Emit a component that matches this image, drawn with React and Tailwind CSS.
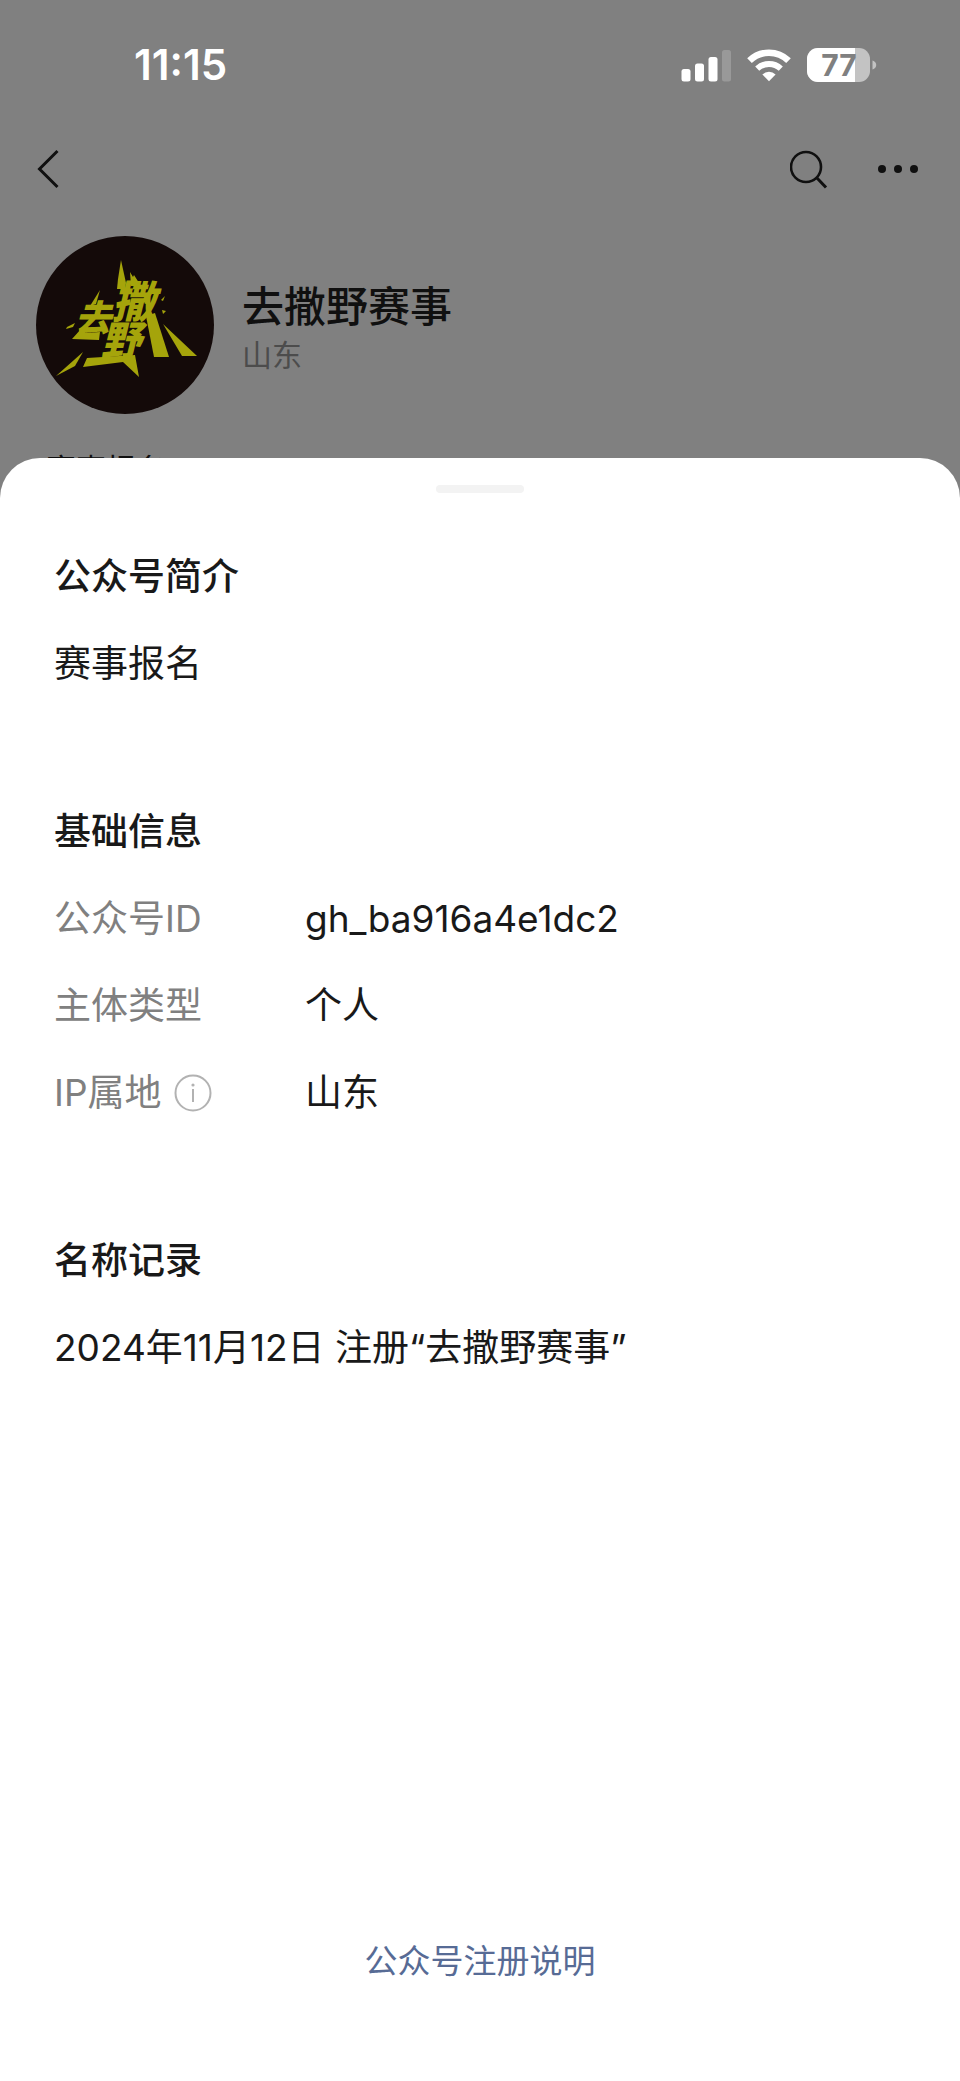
import React from "react";

const infoRows = [
  { label: "公众号ID", value: "gh_ba916a4e1dc2" },
  { label: "主体类型", value: "个人" },
  { label: "IP属地", value: "山东", hint: true },
];

function SignalIcon() {
  return (
    <svg width="50" height="34" viewBox="0 0 50 34" fill="white" aria-hidden="true">
      <rect x="0.5" y="21" width="9" height="12.5" rx="2.5" />
      <rect x="14" y="15.5" width="9" height="18" rx="2.5" />
      <rect x="27.5" y="9" width="9" height="24.5" rx="2.5" />
      <rect x="41" y="2" width="9" height="31.5" rx="2.5" opacity="0.2" />
    </svg>
  );
}

function WifiIcon() {
  return (
    <svg width="44" height="34" viewBox="0 0 44 34" fill="none" stroke="white" aria-hidden="true">
      <path d="M2.5 12.7a28 28 0 0 1 39 0" strokeWidth="6.6" />
      <path d="M10.2 20.6a17.5 17.5 0 0 1 23.6 0" strokeWidth="6" />
      <path d="M22 33.2l-6.6-6.7a9.6 9.6 0 0 1 13.2 0z" fill="white" stroke="none" />
    </svg>
  );
}

function BatteryIcon() {
  return (
    <svg width="70" height="34" viewBox="0 0 70 34" aria-label="77%">
      <defs>
        <clipPath id="battery-body">
          <rect x="0" y="0" width="63" height="34" rx="11" />
        </clipPath>
      </defs>
      <g clipPath="url(#battery-body)">
        <rect width="63" height="34" fill="#c3c3c3" />
        <rect width="48" height="34" fill="white" />
      </g>
      <path d="M65.5 12.5c2.4.6 3.7 2.3 3.7 4.5s-1.3 3.9-3.7 4.5z" fill="#c3c3c3" />
      <text x="32" y="28" textAnchor="middle" fill="#808080" className="font-['Inter',sans-serif] text-[30px] font-bold">
        77
      </text>
    </svg>
  );
}

function Avatar() {
  return (
    <svg viewBox="0 0 178 178" className="size-[178px] shrink-0 rounded-full bg-[#140a09]" fill="#a5a40b" aria-label="去撒野赛事">
      <path d="M85 24l5 23-1 6h-8l1-10z" />
      <path d="M94 36l3 5 1-2 7 11h-10z" />
      <path d="M64 54l-4 14-6 2z" />
      <path d="M110 80l9-3 14 44h-15z" />
      <path d="M127 88l34 32h-15z" />
      <path d="M47 116l-8 14-19 10z" />
      <path d="M51 122l48-3 4 22-16-15-40 5z" />
      <path d="M36 103l9-10 4 4 15-1-1 8z" />
      <path d="M31 91l8-4-2 4-7 2zM125 64l4-4-2 5zM126 74l4 1-3 3z" />
      <g className="font-['Noto_Sans_CJK_SC',sans-serif] font-black italic">
        <text x="39" y="95" className="text-[36px]">去</text>
        <text x="76" y="82" className="text-[44px]">撒</text>
        <text x="65" y="119" className="text-[40px]">野</text>
      </g>
    </svg>
  );
}

function StatusBar() {
  return (
    <div className="flex h-[130px] items-center justify-between pr-[83px] pl-[134px]">
      <span className="text-[42px] leading-[48px] font-semibold text-white">11:15</span>
      <div className="flex items-center gap-4">
        <SignalIcon />
        <WifiIcon />
        <BatteryIcon />
      </div>
    </div>
  );
}

function NavBar() {
  return (
    <nav className="flex h-[78px] items-center justify-between px-9 text-[#101010]">
      <button type="button" aria-label="返回">
        <svg width="24" height="40" viewBox="0 0 24 40" fill="none" stroke="currentColor" strokeWidth="3">
          <path d="M21.5 2L3.5 20l18 18" />
        </svg>
      </button>
      <div className="flex items-center gap-11">
        <button type="button" aria-label="搜索">
          <svg width="40" height="40" viewBox="0 0 40 40" fill="none" stroke="currentColor" strokeWidth="2.6">
            <circle cx="16" cy="18" r="15" />
            <path d="M26.5 28.5L36 38.5" strokeWidth="3" />
          </svg>
        </button>
        <button type="button" aria-label="更多">
          <svg width="50" height="40" viewBox="0 0 50 40" fill="currentColor">
            <circle cx="8" cy="20" r="4" />
            <circle cx="24" cy="20" r="4" />
            <circle cx="40" cy="20" r="4" />
          </svg>
        </button>
      </div>
    </nav>
  );
}

function InfoIcon() {
  return (
    <svg width="38" height="38" viewBox="0 0 38 38" fill="none" stroke="#b2b2b2" strokeWidth="2">
      <circle cx="19" cy="19" r="17.5" />
      <path d="M19 15v13" />
      <circle cx="19" cy="11" r="1.6" fill="#b2b2b2" stroke="none" />
    </svg>
  );
}

function Section({ title, children }) {
  return (
    <section className="flex flex-col gap-9">
      <h2 className="font-medium">{title}</h2>
      {children}
    </section>
  );
}

function App() {
  return (
    <div className="flex min-h-screen flex-col bg-[#808080] font-['Inter','Noto_Sans_CJK_SC',sans-serif]">
      <StatusBar />
      <NavBar />
      <header className="flex items-center gap-7 px-9 pt-7">
        <Avatar />
        <div className="flex flex-col pt-2">
          <h1 className="text-[42px] leading-[52px] font-medium text-[#101010]">去撒野赛事</h1>
          <p className="text-[30px] leading-[44px] text-[#4c4c4c]">山东</p>
        </div>
      </header>
      <p className="h-11 overflow-hidden px-[46px] pt-[33px] text-[30px] leading-[44px] text-[#101010]">赛事报名</p>

      <main className="z-10 flex flex-1 flex-col rounded-t-[40px] bg-white px-[54px] pt-[27px] pb-[95px] text-[37px] leading-[51px] text-[#191919]">
        <div className="h-2 w-[88px] self-center rounded-sm bg-[#f3f3f3]" />
        <div className="flex flex-col gap-[117px] pt-[58px]">
          <Section title="公众号简介">
            <p>赛事报名</p>
          </Section>
          <Section title="基础信息">
            <dl className="flex flex-col gap-9">
              {infoRows.map((row) => (
                <div key={row.label} className="flex">
                  <dt className="flex w-[251px] items-center gap-3 text-[#808080]">
                    {row.label}
                    {row.hint && (
                      <button type="button" aria-label="IP属地说明">
                        <InfoIcon />
                      </button>
                    )}
                  </dt>
                  <dd>{row.value}</dd>
                </div>
              ))}
            </dl>
          </Section>
          <Section title="名称记录">
            <p>2024年11月12日 注册“去撒野赛事”</p>
          </Section>
        </div>
        <a href="#register" className="mt-auto self-center text-[33px] leading-[50px] text-[#576b95]">
          公众号注册说明
        </a>
      </main>
    </div>
  );
}

export default App;
